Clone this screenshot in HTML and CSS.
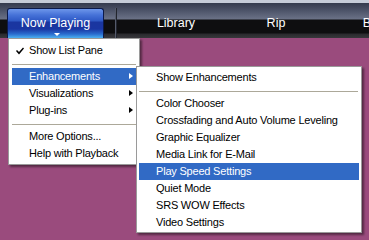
FILE: index.html
```
<!DOCTYPE html>
<html lang="en">
<head>
    <meta charset="UTF-8">
    <meta name="viewport" content="width=device-width, initial-scale=1.0">
    <title>Now Playing menu</title>
    <link rel="stylesheet" href="styles.css">
</head>
<body>
    <div class="toolbar">
        <div class="tab active">Now Playing<span class="caret"></span></div>
        <div class="divider"></div>
        <div class="tab">Library</div>
        <div class="tab">Rip</div>
        <div class="tab">Burn</div>
    </div>

    <div class="menu main-menu">
        <div class="item">
            <svg class="check" width="8" height="8" viewBox="0 0 8 8"><path d="M0 4 L1 3 L3 5 L7 0.5 L8 1.5 L3 7.5 Z" fill="#000"/></svg>
            Show List Pane
        </div>
        <div class="sep"></div>
        <div class="item hot">Enhancements<span class="arrow"></span></div>
        <div class="item">Visualizations<span class="arrow"></span></div>
        <div class="item">Plug-ins<span class="arrow"></span></div>
        <div class="sep"></div>
        <div class="item">More Options...</div>
        <div class="item">Help with Playback</div>
    </div>

    <div class="menu sub-menu">
        <div class="item">Show Enhancements</div>
        <div class="sep"></div>
        <div class="item">Color Chooser</div>
        <div class="item">Crossfading and Auto Volume Leveling</div>
        <div class="item">Graphic Equalizer</div>
        <div class="item">Media Link for E-Mail</div>
        <div class="item hot">Play Speed Settings</div>
        <div class="item">Quiet Mode</div>
        <div class="item">SRS WOW Effects</div>
        <div class="item">Video Settings</div>
    </div>
</body>
</html>
```

FILE: styles.css
```
body {
    margin: 0;
    width: 369px;
    height: 240px;
    overflow: hidden;
    position: relative;
    background-color: #9a4b7d;
    font-family: "Liberation Sans", Arial, sans-serif;
}
.toolbar {
    height: 35px;
    border-top: 3px solid #c6ccd8;
    background: linear-gradient(to bottom, #343a4d 0, #4e556a 8px, #6a7186 16px, #0e0e10 17px, #0e0e10 30px, #2a2a2e 31px, #38383c 35px);
    display: flex;
    align-items: flex-end;
    white-space: nowrap;
    overflow: hidden;
}
.tab {
    width: 100px;
    height: 30px;
    padding-top: 8px;
    box-sizing: border-box;
    line-height: 15px;
    font-size: 12.5px;
    color: #fff;
    text-align: center;
    flex-shrink: 0;
}
.tab.active {
    position: relative;
    width: 97px;
    margin-left: 7px;
    border: 1px solid #0c1a4a;
    border-bottom: none;
    border-radius: 3px 3px 0 0;
    padding-top: 7px;
    background: linear-gradient(to bottom, #6d96ea 0, #4672d8 6px, #2e58c4 12px, #1a36a0 13px, #1a36a2 20px, #2a6cce 25px, #4cb0f0 29px);
}
.caret {
    position: absolute;
    left: 46px;
    bottom: 2px;
    border-left: 3px solid transparent;
    border-right: 3px solid transparent;
    border-top: 3px solid #fff;
}
.divider {
    width: 1px;
    height: 30px;
    margin-left: 11px;
    margin-right: 9px;
    background-color: #555b6c;
    border-right: 1px solid #22252e;
    flex-shrink: 0;
}
.menu {
    position: absolute;
    background-color: #fff;
    border: 1px solid #9a9a9a;
    box-shadow: 2px 2px 2px rgba(0, 0, 0, 0.45);
    font-size: 11px;
    letter-spacing: -0.2px;
    color: #000;
    white-space: nowrap;
}
.main-menu {
    left: 8px;
    top: 38px;
    width: 130px;
    padding: 3px 0 2px;
}
.sub-menu {
    left: 136px;
    top: 66px;
    width: 224px;
    padding: 2px 0 1px;
}
.item {
    position: relative;
    height: 17px;
    line-height: 17px;
    margin: 0 3px;
    padding-left: 17px;
}
.sub-menu .item {
    margin: 0 2px;
    padding-left: 17px;
}
.item.hot {
    background-color: #316ac5;
    color: #fff;
}
.check {
    position: absolute;
    left: 4px;
    top: 5px;
}
.arrow {
    position: absolute;
    right: 3px;
    top: 5px;
    border-top: 3.5px solid transparent;
    border-bottom: 3.5px solid transparent;
    border-left: 4px solid #000;
}
.item.hot .arrow {
    border-left-color: #fff;
}
.sep {
    height: 1px;
    margin: 5px 3px 3px;
    background-color: #aca899;
}
.sub-menu .sep {
    margin: 5px 3px 3px 2px;
}
```
